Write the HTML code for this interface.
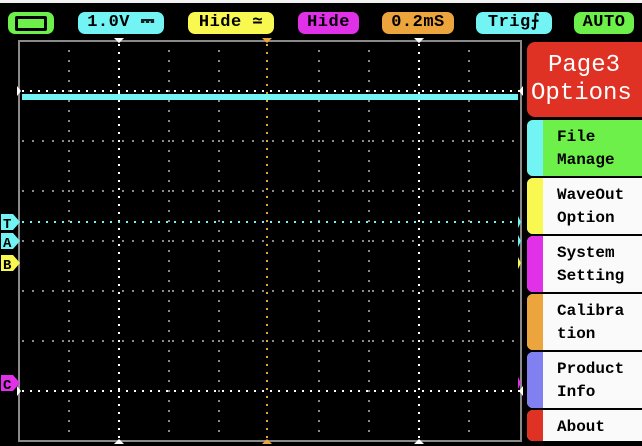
<!DOCTYPE html>
<html><head><meta charset="utf-8"><style>
html,body{margin:0;padding:0;}
body{width:642px;height:446px;background:#000;position:relative;overflow:hidden;font-family:"Liberation Mono","DejaVu Sans Mono",monospace;}
.top{position:absolute;left:0;top:0;width:642px;height:3px;background:#f2f2f2;}
.pill{position:absolute;top:12px;height:22px;border-radius:7px;color:#000;font-weight:bold;font-size:17px;line-height:22px;text-align:center;letter-spacing:0.5px;}
.btn{position:absolute;left:527px;width:120px;background:#fafafa;border-radius:6px 0 0 6px;overflow:hidden;}
.btn .s{position:absolute;left:0;top:0;bottom:0;width:16px;}
.btn .t{position:absolute;left:30px;top:6px;font-weight:bold;font-size:16px;line-height:23px;color:#000;white-space:pre;}
</style></head><body>
<div class="top"></div>
<div class="pill" style="left:8px;width:46px;background:#6ef04a;"><span style="display:inline-block;width:26px;height:9px;border:3px solid #000;border-radius:2px;margin-top:4px;vertical-align:top;"></span></div>
<div class="pill" style="left:78px;width:86px;background:#72f4f4;">1.0V ⎓</div>
<div class="pill" style="left:188px;width:86px;background:#f8f850;">Hide ≃</div>
<div class="pill" style="left:298px;width:61px;background:#e030e8;">Hide</div>
<div class="pill" style="left:382px;width:72px;background:#eca43c;">0.2mS</div>
<div class="pill" style="left:476px;width:76px;background:#72f4f4;">Trig⨍</div>
<div class="pill" style="left:574px;width:60px;background:#6ef04a;">AUTO</div>

<svg width="642" height="446" style="position:absolute;left:0;top:0">
<g stroke="#8a8a8a" stroke-width="2" stroke-dasharray="2 8">
<line x1="69" y1="50" x2="69" y2="440"/><line x1="169" y1="50" x2="169" y2="440"/><line x1="219" y1="50" x2="219" y2="440"/>
<line x1="319" y1="50" x2="319" y2="440"/><line x1="369" y1="50" x2="369" y2="440"/><line x1="469" y1="50" x2="469" y2="440"/>
<line x1="22" y1="141" x2="520" y2="141"/><line x1="22" y1="191" x2="520" y2="191"/><line x1="22" y1="241" x2="520" y2="241"/>
<line x1="22" y1="291" x2="520" y2="291"/><line x1="22" y1="341" x2="520" y2="341"/>
</g>
<g stroke="#fff" stroke-width="2" stroke-dasharray="2 6">
<line x1="119" y1="44" x2="119" y2="440"/><line x1="419" y1="44" x2="419" y2="440"/>
<line x1="22" y1="91" x2="520" y2="91"/><line x1="22" y1="391" x2="520" y2="391"/>
</g>
<line x1="267" y1="44" x2="267" y2="440" stroke="#eca43c" stroke-width="2" stroke-dasharray="2 6"/>
<line x1="22" y1="222" x2="520" y2="222" stroke="#72f4f4" stroke-width="2" stroke-dasharray="2 6"/>
<rect x="19" y="41" width="502" height="400" fill="none" stroke="#8a8a8a" stroke-width="2"/>
<rect x="22" y="94" width="496" height="6" fill="#72f4f4"/>
<path d="M114 38h10l-5 5z M414 38h10l-5 5z" fill="#fff"/>
<path d="M262 38h10l-5 5z" fill="#eca43c"/>
<path d="M114 444l5-5l5 5z M414 444l5-5l5 5z" fill="#fff"/>
<path d="M262 444l5-5l5 5z" fill="#eca43c"/>
<path d="M17 86v10l4-5z M523 86v10l-4-5z M17 386v10l4-5z M523 386v10l-4-5z" fill="#fff"/>
<path d="M518 216v12l3-6z M518 235v12l3-6z" fill="#72f4f4"/>
<path d="M518 257v12l3-6z" fill="#f8f850"/>
<path d="M518 377v12l3-6z" fill="#e030e8"/>
<path d="M1 214h12l7 8l-7 8h-12z" fill="#72f4f4"/><text x="3" y="228" font-size="14" font-weight="bold" font-family="Liberation Mono" fill="#000">T</text>
<path d="M1 233h12l7 8l-7 8h-12z" fill="#72f4f4"/><text x="3" y="247" font-size="14" font-weight="bold" font-family="Liberation Mono" fill="#000">A</text>
<path d="M1 255h12l7 8l-7 8h-12z" fill="#f8f850"/><text x="3" y="269" font-size="14" font-weight="bold" font-family="Liberation Mono" fill="#000">B</text>
<path d="M1 375h12l7 8l-7 8h-12z" fill="#e030e8"/><text x="3" y="389" font-size="14" font-weight="bold" font-family="Liberation Mono" fill="#000">C</text>
</svg>

<div style="position:absolute;left:527px;top:42px;width:120px;height:75px;background:#e03224;border-radius:8px 0 0 8px;color:#fff;font-family:'Liberation Mono',monospace;font-size:24px;line-height:28px;">
<div style="position:absolute;left:21px;top:10px;">Page3</div>
<div style="position:absolute;left:4px;top:38px;">Options</div>
</div>
<div class="btn" style="top:120px;height:56px;background:#6ef04a;"><div class="s" style="background:#72f4f4"></div><div class="t">File
Manage</div></div>
<div class="btn" style="top:178px;height:56px;"><div class="s" style="background:#f8f850"></div><div class="t">WaveOut
Option</div></div>
<div class="btn" style="top:236px;height:56px;"><div class="s" style="background:#e030e8"></div><div class="t">System
Setting</div></div>
<div class="btn" style="top:294px;height:56px;"><div class="s" style="background:#eca43c"></div><div class="t">Calibra
tion</div></div>
<div class="btn" style="top:352px;height:56px;"><div class="s" style="background:#8080f0"></div><div class="t">Product
Info</div></div>
<div class="btn" style="top:410px;height:31px;"><div class="s" style="background:#e03224"></div><div class="t">About</div></div>
</body></html>
